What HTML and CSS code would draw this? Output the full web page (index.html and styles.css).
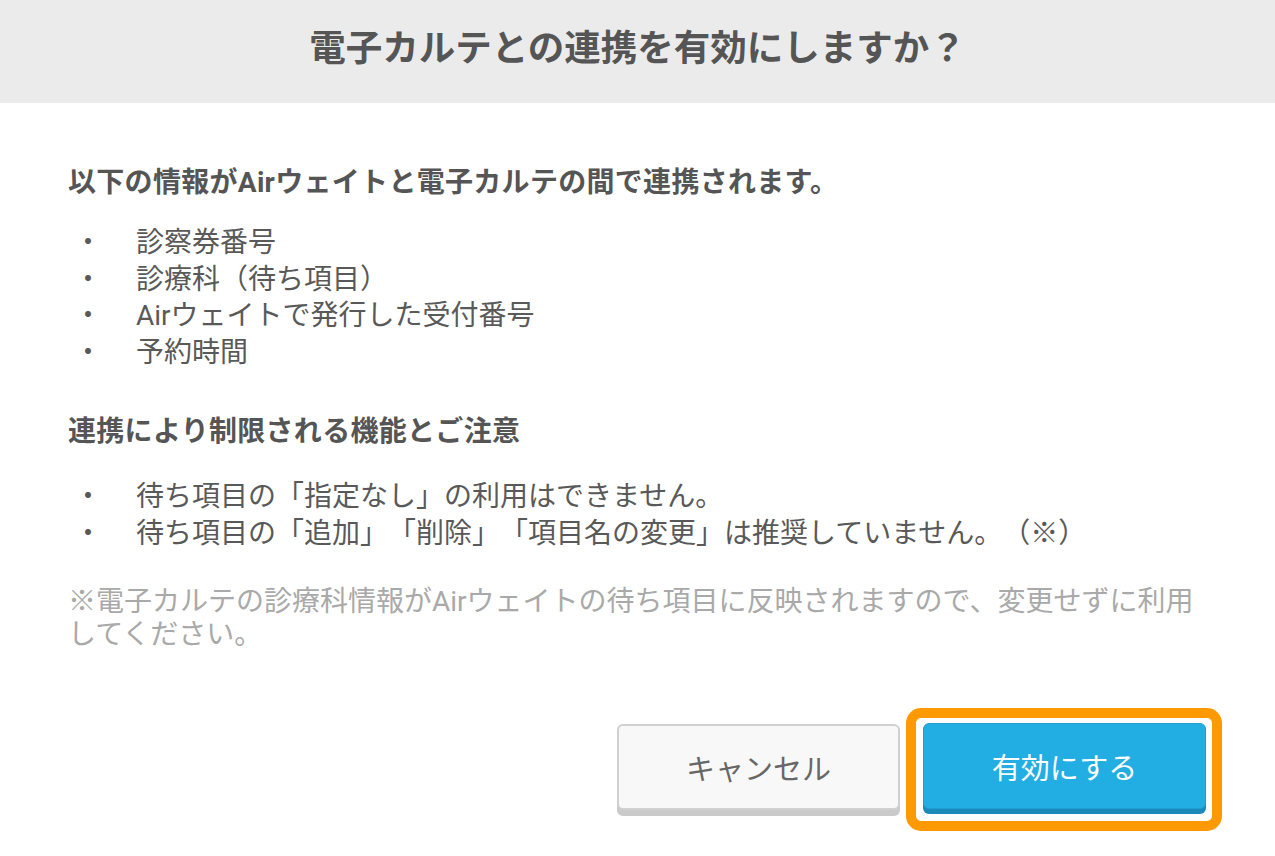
FILE: index.html
```html
<!DOCTYPE html>
<html lang="ja">
<head>
<meta charset="utf-8">
<title>電子カルテとの連携</title>
<link rel="stylesheet" href="styles.css">
</head>
<body>
<div class="dialog">
  <header class="dialog-header">
    <h1 class="dialog-title">電子カルテとの連携を有効にしますか？</h1>
  </header>
  <main class="dialog-body">
    <h2 class="section-title first">以下の情報がAirウェイトと電子カルテの間で連携されます。</h2>
    <ul class="bullets">
      <li><span class="dot">・</span><span>診察券番号</span></li>
      <li><span class="dot">・</span><span>診療科（待ち項目）</span></li>
      <li><span class="dot">・</span><span>Airウェイトで発行した受付番号</span></li>
      <li><span class="dot">・</span><span>予約時間</span></li>
    </ul>
    <h2 class="section-title second">連携により制限される機能とご注意</h2>
    <ul class="bullets second-list">
      <li><span class="dot">・</span><span>待ち項目の「指定なし」の利用はできません。</span></li>
      <li><span class="dot">・</span><span>待ち項目の「追加」「削除」「項目名の変更」は推奨していません。（※）</span></li>
    </ul>
    <p class="note">※電子カルテの診療科情報がAirウェイトの待ち項目に反映されますので、変更せずに利用してください。</p>
  </main>
  <footer class="dialog-actions">
    <button class="btn btn-cancel" type="button">キャンセル</button>
    <span class="highlight">
      <button class="btn btn-primary" type="button">有効にする</button>
    </span>
  </footer>
</div>
</body>
</html>
```
FILE: styles.css
```css
* { box-sizing: border-box; }
html, body {
  margin: 0;
  padding: 0;
  background: #ffffff;
}
body {
  font-family: Roboto, "Noto Sans CJK JP", sans-serif;
  color: #555555;
  width: 1275px;
  height: 856px;
  overflow: hidden;
  text-spacing-trim: space-all;
}
.dialog-header {
  height: 103px;
  background: #ebebeb;
  display: flex;
  align-items: center;
  justify-content: center;
}
.dialog-title {
  margin: 0;
  font-size: 36.5px;
  font-weight: 700;
  color: #555555;
  line-height: 1;
  padding-bottom: 4px;
}
.dialog-body {
  padding: 62px 70px 0 68px;
}
.section-title {
  margin: 0;
  font-size: 28px;
  font-weight: 700;
  line-height: 36px;
  color: #555555;
  letter-spacing: 0.3px;
}
.section-title.second {
  margin-top: 43px;
}
.bullets {
  list-style: none;
  margin: 24px 0 0 0;
  padding: 0;
  font-size: 28px;
  line-height: 36.5px;
  color: #595959;
}
.bullets.second-list {
  margin-top: 29px;
}
.bullets li {
  display: flex;
}
.dot {
  width: 68px;
  padding-left: 6px;
  flex: none;
}
.note {
  margin: 33px 0 0 0;
  font-size: 28px;
  line-height: 33px;
  color: #a9a9a9;
}
.dialog-actions {
  display: flex;
  justify-content: flex-end;
  align-items: center;
  padding-right: 53px;
  margin-top: 57px;
  gap: 6px;
}
.btn {
  font-family: Roboto, "Noto Sans CJK JP", sans-serif;
  font-size: 29px;
  width: 283px;
  height: 86px;
  border-radius: 6px;
  cursor: pointer;
  padding: 0;
}
.btn-cancel {
  background: #f8f8f8;
  border: 2px solid #d0d0d0;
  color: #676767;
  box-shadow: 0 6px 0 #cacaca;
  margin-bottom: 6px;
}
.highlight {
  display: flex;
  border: 10px solid #ff9900;
  border-radius: 15px;
  padding: 5px 6px 7px 7px;
  background: #ffffff;
}
.btn-primary {
  background: #22aee3;
  border: 1px solid #1d9fd2;
  color: #ffffff;
  box-shadow: 0 5px 0 #1b89b9;
  margin-bottom: 5px;
}
```
